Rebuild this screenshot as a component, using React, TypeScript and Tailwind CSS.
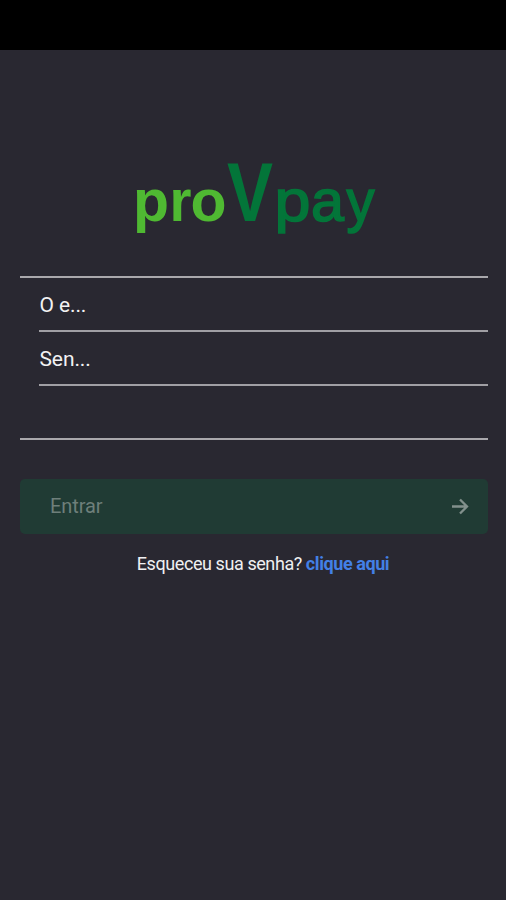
function Logo() {
  return (
    <svg
      width="260"
      height="96"
      viewBox="126 150 260 96"
      className="shrink-0 overflow-visible font-['Liberation_Sans',Arial,sans-serif]"
      role="img"
      aria-label="proVpay"
    >
      <text y="220.5" fontSize="60" fontWeight="700" fill="#4fb932">
        <tspan x="133" textLength="36" lengthAdjust="spacingAndGlyphs">p</tspan>
        <tspan x="169.5" textLength="22" lengthAdjust="spacingAndGlyphs">r</tspan>
        <tspan x="190.5" textLength="36" lengthAdjust="spacingAndGlyphs">o</tspan>
      </text>
      <text x="227" y="221" fontSize="83" fontWeight="700" fill="#037539" textLength="46" lengthAdjust="spacingAndGlyphs">
        V
      </text>
      <text y="220.5" fontSize="59" fill="#037539" stroke="#037539" strokeWidth="1.6">
        <tspan x="274.5" textLength="36" lengthAdjust="spacingAndGlyphs">p</tspan>
        <tspan x="311" textLength="33" lengthAdjust="spacingAndGlyphs">a</tspan>
        <tspan x="346.5" textLength="28" lengthAdjust="spacingAndGlyphs">y</tspan>
      </text>
    </svg>
  );
}

function Field({ label }: { label: string }) {
  return (
    <div className="ml-[19px] flex h-[54px] items-center border-b-2 border-[#a09fa4] text-[21px] tracking-[-0.1px] text-[#f2f2f3]">
      <span className="pl-[0.5px] pt-[3px]">{label}</span>
    </div>
  );
}

export default function App() {
  return (
    <div className="flex h-[900px] w-[506px] flex-col bg-[#292831] font-[Roboto,sans-serif]">
      <div className="h-[50px] shrink-0 bg-black" />
      <main className="flex flex-col px-5 pr-[18px] pt-[100px]">
        <div className="flex h-[96px] pl-[106px]">
          <Logo />
        </div>
        <div className="mt-[30px] flex h-[164px] flex-col border-y-2 border-[#a9a8ac]">
          <Field label="O e..." />
          <Field label="Sen..." />
        </div>
        <button className="mt-[39px] flex h-[55px] items-center justify-between rounded-[5px] bg-[#203b34] pl-[30px] pr-[19px] text-[20px] text-[#6e7f7a]">
          <span className="pb-px tracking-[-0.1px]">Entrar</span>
          <svg width="18" height="18" viewBox="0 0 18 18" fill="none" stroke="#82908c" strokeWidth="2.3">
            <path d="M1 8.5h15M9 1.5 16 8.5 9 15.5" />
          </svg>
        </button>
        <p className="mt-[17px] flex h-6 items-center justify-center gap-1 pl-[18px] text-[18px] text-[#f0f0f2]">
          <span className="tracking-[-0.42px]">Esqueceu sua senha?</span>
          <a className="font-bold tracking-[-0.42px] text-[#4380e6]">clique aqui</a>
        </p>
      </main>
    </div>
  );
}
